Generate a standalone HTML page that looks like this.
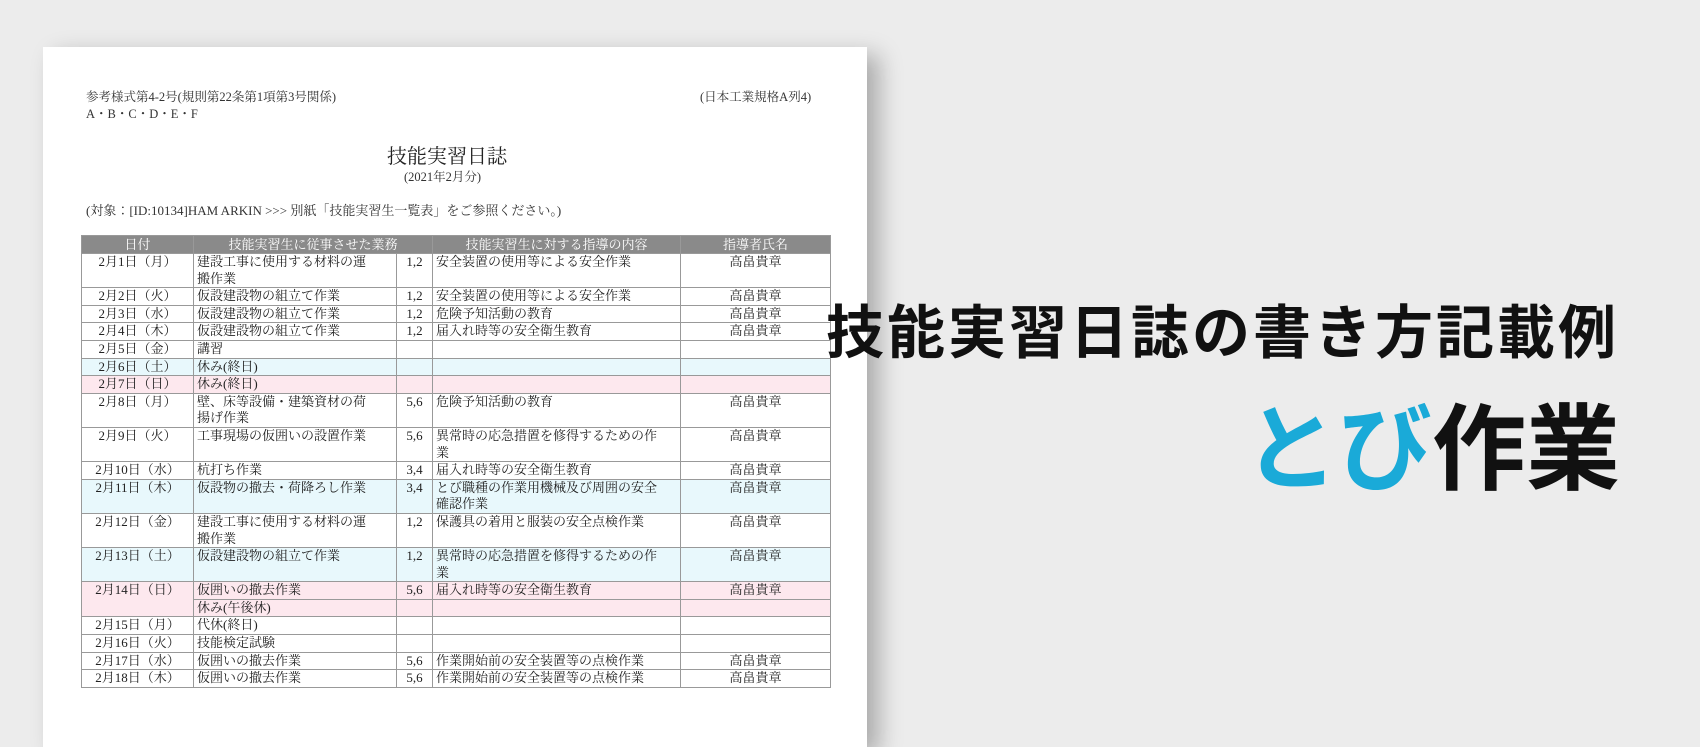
<!DOCTYPE html>
<html><head><meta charset="utf-8"><style>
*{margin:0;padding:0;box-sizing:border-box}
body{width:1700px;height:680px;background:#ececec;overflow:hidden;position:relative;font-family:"Liberation Serif","Noto Serif CJK JP",serif;color:#222}
.paper{position:absolute;left:43px;top:47px;width:824px;height:700px;background:#fff;box-shadow:12px 8px 22px rgba(0,0,0,.28)}
.t{position:absolute;font-size:12.5px;white-space:nowrap;color:#333}
table{position:absolute;left:81px;top:235px;width:749px;border-collapse:collapse;table-layout:fixed;font-size:13px;color:#222}
td,th{border:1px solid #999;line-height:16.6px;padding:0 3px;vertical-align:top;white-space:nowrap;overflow:hidden}
th{background:#8a8a8a;color:#fff;font-weight:normal;text-align:center;line-height:17px}
td.c{text-align:center}
tr.sa td{background:#e8f8fc}
tr.su td,td.su{background:#fde8ee}
.h1{position:absolute;left:826px;top:302px;font-family:"Liberation Sans","Noto Sans CJK JP",sans-serif;font-size:58px;font-weight:700;letter-spacing:3px;color:#111;white-space:nowrap;line-height:64px}
.h2{position:absolute;left:1244px;top:400px;font-family:"Liberation Sans","Noto Sans CJK JP",sans-serif;font-size:94px;font-weight:700;color:#111;white-space:nowrap;line-height:100px;letter-spacing:0px}
.h2 span{color:#1aaad8}
</style></head><body>
<div class="paper"></div>
<div class="t" style="left:86px;top:87px">参考様式第4-2号(規則第22条第1項第3号関係)</div>
<div class="t" style="left:86px;top:104px">A・B・C・D・E・F</div>
<div class="t" style="left:700px;top:87px">(日本工業規格A列4)</div>
<div class="t" style="left:387px;top:140px;font-size:20px;color:#222">技能実習日誌</div>
<div class="t" style="left:404px;top:167px;font-size:12.5px">(2021年2月分)</div>
<div class="t" style="left:86px;top:200px;font-size:13px">(対象：[ID:10134]HAM ARKIN &gt;&gt;&gt; 別紙「技能実習生一覧表」をご参照ください。)</div>
<table>
<colgroup><col style="width:112px"><col style="width:203px"><col style="width:36px"><col style="width:248px"><col style="width:150px"></colgroup>
<tr><th>日付</th><th colspan="2">技能実習生に従事させた業務</th><th>技能実習生に対する指導の内容</th><th>指導者氏名</th></tr>
<tr><td class="c">2月1日（月）</td><td>建設工事に使用する材料の運<br>搬作業</td><td class="c">1,2</td><td>安全装置の使用等による安全作業</td><td class="c">高畠貴章</td></tr>
<tr><td class="c">2月2日（火）</td><td>仮設建設物の組立て作業</td><td class="c">1,2</td><td>安全装置の使用等による安全作業</td><td class="c">高畠貴章</td></tr>
<tr><td class="c">2月3日（水）</td><td>仮設建設物の組立て作業</td><td class="c">1,2</td><td>危険予知活動の教育</td><td class="c">高畠貴章</td></tr>
<tr><td class="c">2月4日（木）</td><td>仮設建設物の組立て作業</td><td class="c">1,2</td><td>届入れ時等の安全衛生教育</td><td class="c">高畠貴章</td></tr>
<tr><td class="c">2月5日（金）</td><td>講習</td><td></td><td></td><td></td></tr>
<tr class="sa"><td class="c">2月6日（土）</td><td>休み(終日)</td><td></td><td></td><td></td></tr>
<tr class="su"><td class="c">2月7日（日）</td><td>休み(終日)</td><td></td><td></td><td></td></tr>
<tr><td class="c">2月8日（月）</td><td>壁、床等設備・建築資材の荷<br>揚げ作業</td><td class="c">5,6</td><td>危険予知活動の教育</td><td class="c">高畠貴章</td></tr>
<tr><td class="c">2月9日（火）</td><td>工事現場の仮囲いの設置作業</td><td class="c">5,6</td><td>異常時の応急措置を修得するための作<br>業</td><td class="c">高畠貴章</td></tr>
<tr><td class="c">2月10日（水）</td><td>杭打ち作業</td><td class="c">3,4</td><td>届入れ時等の安全衛生教育</td><td class="c">高畠貴章</td></tr>
<tr class="sa"><td class="c">2月11日（木）</td><td>仮設物の撤去・荷降ろし作業</td><td class="c">3,4</td><td>とび職種の作業用機械及び周囲の安全<br>確認作業</td><td class="c">高畠貴章</td></tr>
<tr><td class="c">2月12日（金）</td><td>建設工事に使用する材料の運<br>搬作業</td><td class="c">1,2</td><td>保護具の着用と服装の安全点検作業</td><td class="c">高畠貴章</td></tr>
<tr class="sa"><td class="c">2月13日（土）</td><td>仮設建設物の組立て作業</td><td class="c">1,2</td><td>異常時の応急措置を修得するための作<br>業</td><td class="c">高畠貴章</td></tr>
<tr class="su"><td class="c" rowspan="2">2月14日（日）</td><td>仮囲いの撤去作業</td><td class="c">5,6</td><td>届入れ時等の安全衛生教育</td><td class="c">高畠貴章</td></tr>
<tr class="su"><td>休み(午後休)</td><td></td><td></td><td></td></tr>
<tr><td class="c">2月15日（月）</td><td>代休(終日)</td><td></td><td></td><td></td></tr>
<tr><td class="c">2月16日（火）</td><td>技能検定試験</td><td></td><td></td><td></td></tr>
<tr><td class="c">2月17日（水）</td><td>仮囲いの撤去作業</td><td class="c">5,6</td><td>作業開始前の安全装置等の点検作業</td><td class="c">高畠貴章</td></tr>
<tr><td class="c">2月18日（木）</td><td>仮囲いの撤去作業</td><td class="c">5,6</td><td>作業開始前の安全装置等の点検作業</td><td class="c">高畠貴章</td></tr>
</table>
<div class="h1">技能実習日誌の書き方記載例</div>
<div class="h2"><span>とび</span>作業</div>
</body></html>
